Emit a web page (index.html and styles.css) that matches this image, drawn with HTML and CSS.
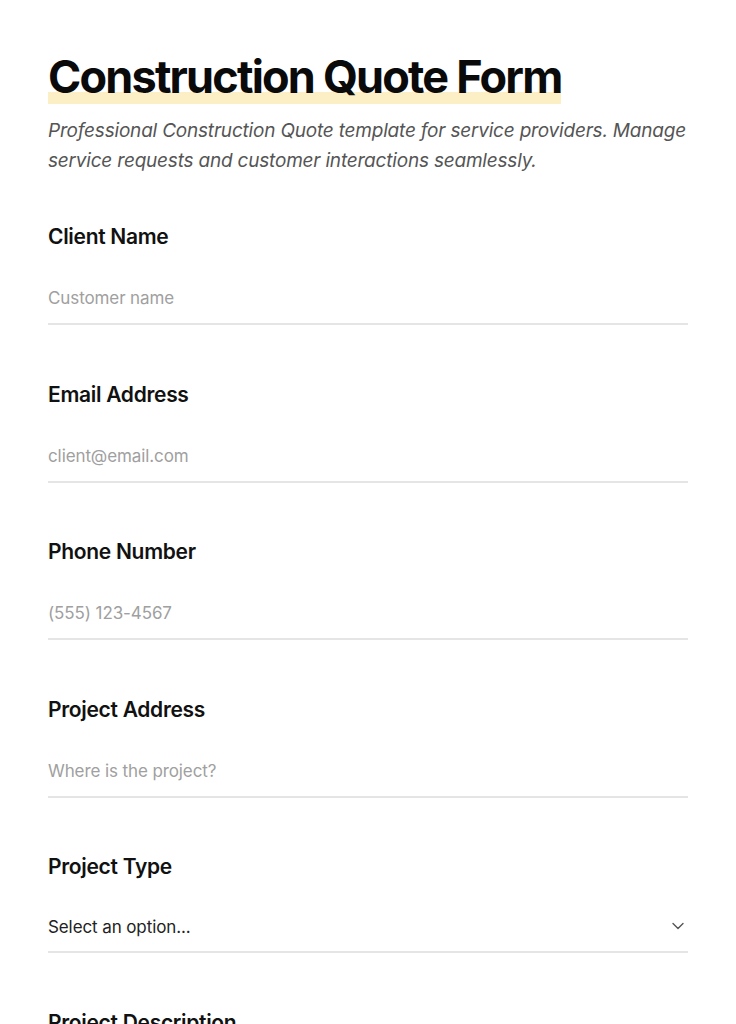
FILE: index.html
```html
<!DOCTYPE html>
<html lang="en">
<head>
<meta charset="utf-8">
<title>Construction Quote Form</title>
<link rel="stylesheet" href="styles.css">
</head>
<body>
<main class="page">
  <header class="intro">
    <h1 class="title"><span class="title-mark">Construction Quote Form</span></h1>
    <p class="subtitle">Professional Construction Quote template for service providers. Manage service requests and customer interactions seamlessly.</p>
  </header>
  <form class="form">
    <div class="field">
      <label class="label" for="client">Client Name</label>
      <input class="input" id="client" type="text" placeholder="Customer name">
    </div>
    <div class="field">
      <label class="label" for="email">Email Address</label>
      <input class="input" id="email" type="email" placeholder="client@email.com">
    </div>
    <div class="field">
      <label class="label" for="phone">Phone Number</label>
      <input class="input" id="phone" type="tel" placeholder="(555) 123-4567">
    </div>
    <div class="field">
      <label class="label" for="address">Project Address</label>
      <input class="input" id="address" type="text" placeholder="Where is the project?">
    </div>
    <div class="field">
      <label class="label" for="type">Project Type</label>
      <div class="select-wrap">
        <select class="input select" id="type">
          <option>Select an option...</option>
          <option>Residential</option>
          <option>Commercial</option>
          <option>Renovation</option>
        </select>
        <svg class="chevron" width="14" height="14" viewBox="0 0 14 14" aria-hidden="true"><path d="M2 4.5 L7 9.5 L12 4.5" fill="none" stroke="#555" stroke-width="1.4" stroke-linecap="round" stroke-linejoin="round"/></svg>
      </div>
    </div>
    <div class="field">
      <label class="label" for="desc">Project Description</label>
      <textarea class="input textarea" id="desc" placeholder="Describe the work"></textarea>
    </div>
  </form>
</main>
</body>
</html>
```
FILE: styles.css
```css
* { box-sizing: border-box; }
html, body { margin: 0; padding: 0; background: #fff; }
body {
  font-family: "Inter", "Liberation Sans", sans-serif;
  color: #111;
}
.page {
  padding: 48px 48px 48px;
}
.title {
  margin: 0;
  font-size: 45px;
  line-height: 58px;
  font-weight: 700;
  letter-spacing: -1.8px;
  color: #0a0a0a;
}
.title-mark {
  background: linear-gradient(to bottom, transparent calc(100% - 12px), #fcefc6 calc(100% - 12px));
}
.subtitle {
  margin: 10px 0 0;
  font-size: 19px;
  line-height: 30px;
  font-style: italic;
  letter-spacing: -0.2px;
  color: #555;
}
.form {
  margin-top: 47px;
  display: flex;
  flex-direction: column;
  gap: 55.5px;
}
.field {
  display: flex;
  flex-direction: column;
  gap: 23px;
}
.label {
  font-size: 21px;
  line-height: 28px;
  font-weight: 600;
  letter-spacing: -0.3px;
  color: #111;
}
.input {
  display: block;
  width: 100%;
  border: 0;
  border-bottom: 2px solid #e5e5e5;
  padding: 12px 0 13px;
  font-family: inherit;
  font-size: 17px;
  line-height: 24px;
  letter-spacing: -0.1px;
  color: #222;
  background: transparent;
  outline: none;
  border-radius: 0;
}
.input::placeholder { color: #a0a0a0; }
.select-wrap { position: relative; }
.select {
  appearance: none;
  -webkit-appearance: none;
  height: 49px;
  padding: 10px 0 11px;
}
.chevron {
  position: absolute;
  right: 3px;
  top: 15px;
  pointer-events: none;
}
.textarea {
  resize: none;
  height: 120px;
}
```
